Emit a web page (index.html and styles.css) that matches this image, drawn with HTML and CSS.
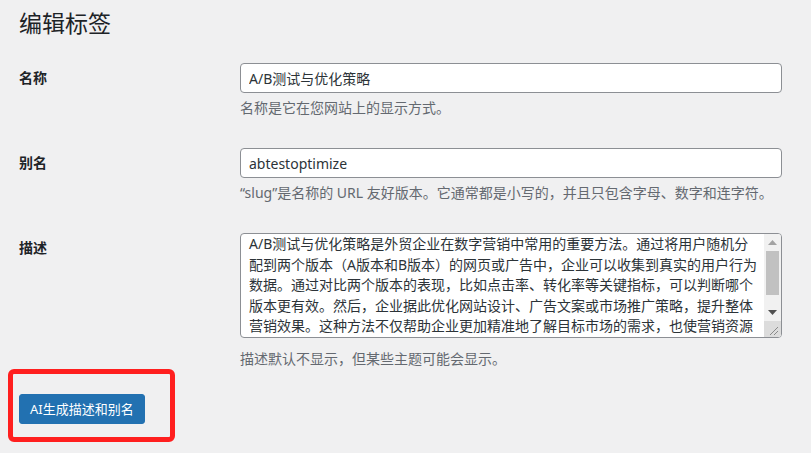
FILE: index.html
```html
<!DOCTYPE html>
<html lang="zh-CN">
<head>
<meta charset="utf-8">
<title>编辑标签</title>
<link rel="stylesheet" href="styles.css">
</head>
<body>
<div class="page">
  <h1 class="title">编辑标签</h1>
  <div class="form">
    <div class="row">
      <label class="label">名称</label>
      <div class="field">
        <input class="input" type="text" value="A/B测试与优化策略">
        <p class="help">名称是它在您网站上的显示方式。</p>
      </div>
    </div>
    <div class="row">
      <label class="label">别名</label>
      <div class="field">
        <input class="input" type="text" value="abtestoptimize">
        <p class="help">“slug”是名称的 URL 友好版本。它通常都是小写的，并且只包含字母、数字和连字符。</p>
      </div>
    </div>
    <div class="row">
      <label class="label">描述</label>
      <div class="field">
        <div class="textarea">
          <div class="ta-text">
            <div class="ta-line">A/B测试与优化策略是外贸企业在数字营销中常用的重要方法。通过将用户随机分</div>
            <div class="ta-line">配到两个版本（A版本和B版本）的网页或广告中，企业可以收集到真实的用户行为</div>
            <div class="ta-line">数据。通过对比两个版本的表现，比如点击率、转化率等关键指标，可以判断哪个</div>
            <div class="ta-line">版本更有效。然后，企业据此优化网站设计、广告文案或市场推广策略，提升整体</div>
            <div class="ta-line">营销效果。这种方法不仅帮助企业更加精准地了解目标市场的需求，也使营销资源</div>
          </div>
          <div class="sb">
            <div class="sb-btn"><svg width="9" height="5" viewBox="0 0 9 5"><polygon points="0,5 9,5 4.5,0" fill="#a3a3a3"/></svg></div>
            <div class="sb-track"><div class="sb-thumb"></div></div>
            <div class="sb-btn"><svg width="9" height="5" viewBox="0 0 9 5"><polygon points="0,0 9,0 4.5,5" fill="#505050"/></svg></div>
            <div class="sb-corner"><svg width="16" height="16" viewBox="0 0 16 16"><line x1="14" y1="6" x2="6" y2="14" stroke="#8a8a8a" stroke-width="1"/><line x1="14" y1="10" x2="10" y2="14" stroke="#8a8a8a" stroke-width="1"/></svg></div>
          </div>
        </div>
        <p class="help help-desc">描述默认不显示，但某些主题可能会显示。</p>
      </div>
    </div>
  </div>
  <div class="actions">
    <button class="btn" type="button">AI生成描述和别名</button>
  </div>
  <div class="annot"></div>
</div>
</body>
</html>
```

FILE: styles.css
```css
* { box-sizing: border-box; }
html, body {
  margin: 0;
  padding: 0;
  background: #f0f0f1;
}
body {
  font-family: "Noto Sans", "Noto Sans CJK SC", sans-serif;
  color: #1d2327;
  font-size: 14px;
}
.page {
  position: relative;
  padding-left: 19px;
  width: 811px;
  height: 453px;
  overflow: hidden;
}
.title {
  margin: 0;
  padding-top: 8px;
  font-size: 23px;
  line-height: 30px;
  font-weight: 400;
  color: #1d2327;
}
.form {
  margin-top: 10px;
}
.row {
  display: grid;
  grid-template-columns: 221px 542px;
  padding: 15px 0;
}
.label {
  padding-top: 5px;
  font-size: 14px;
  line-height: 20px;
  font-weight: 600;
  color: #1d2327;
}
.field {
  display: flex;
  flex-direction: column;
}
.input {
  width: 542px;
  height: 30px;
  margin: 0;
  padding: 0 8px;
  border: 1px solid #8c8f94;
  border-radius: 4px;
  background: #fff;
  font-family: "Noto Sans", "Noto Sans CJK SC", sans-serif;
  font-size: 14px;
  color: #2c3338;
  outline: none;
}
.help {
  margin: 4px 0 0;
  font-size: 14px;
  line-height: 21px;
  color: #646970;
}
.help-desc {
  margin-top: 10px;
}
.textarea {
  display: flex;
  width: 542px;
  height: 105px;
  border: 1px solid #8c8f94;
  border-radius: 4px;
  background: #fff;
  overflow: hidden;
}
.ta-text {
  flex: 1;
  padding: 0 0 0 8px;
  overflow: hidden;
  color: #2c3338;
  font-size: 14px;
  line-height: 20.5px;
}
.ta-line {
  white-space: nowrap;
}
.sb {
  width: 17px;
  display: flex;
  flex-direction: column;
  background: #f1f1f1;
}
.sb-btn {
  height: 17px;
  display: flex;
  align-items: center;
  justify-content: center;
}
.sb-track {
  flex: 1;
  padding: 0 2px;
}
.sb-thumb {
  height: 44px;
  background: #c1c1c1;
}
.sb-corner {
  height: 16px;
  background: #dcdcdc;
}
.sb-corner svg { display: block; }
.actions {
  margin-top: 10px;
}
.btn {
  height: 30px;
  margin: 0;
  padding: 0 10px;
  border: 1px solid #2271b1;
  border-radius: 3px;
  background: #2271b1;
  color: #fff;
  font-family: "Noto Sans", "Noto Sans CJK SC", sans-serif;
  font-size: 13px;
  line-height: 28px;
  cursor: pointer;
}
.annot {
  position: absolute;
  left: 8px;
  top: 369px;
  width: 167px;
  height: 73px;
  border: 5px solid #ff1f1f;
  border-radius: 6px;
  pointer-events: none;
}
```
